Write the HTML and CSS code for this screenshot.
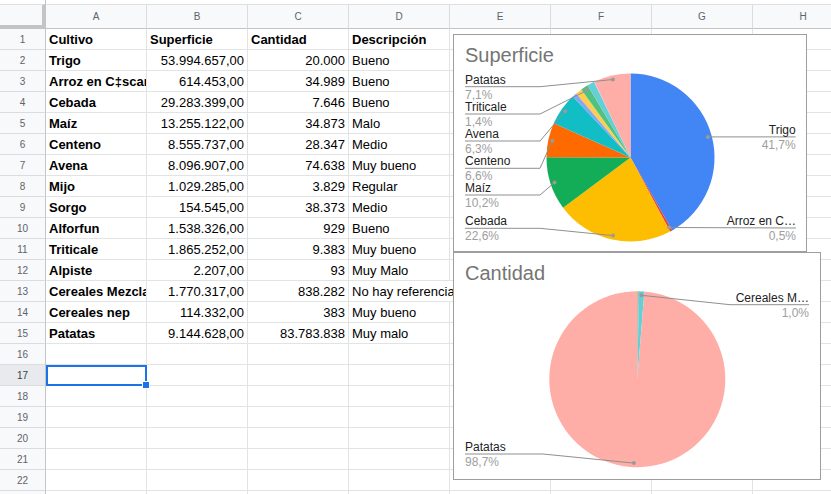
FILE: index.html
```html
<!DOCTYPE html>
<html lang="es">
<head>
<meta charset="utf-8">
<title>Cultivos</title>
<link rel="stylesheet" href="styles.css">
</head>
<body>
<div class="sheet">
  <div class="topbar"><div class="topbar-corner"></div></div>
  <div class="grid">
    <div class="corner"></div>
    <div class="ch">A</div><div class="ch">B</div><div class="ch">C</div><div class="ch">D</div>
    <div class="ch">E</div><div class="ch">F</div><div class="ch">G</div><div class="ch">H</div>

    <div class="rh">1</div><div class="c b">Cultivo</div><div class="c b">Superficie</div><div class="c b">Cantidad</div><div class="c b">Descripción</div><div class="c"></div><div class="c"></div><div class="c"></div><div class="c"></div>
    <div class="rh">2</div><div class="c b">Trigo</div><div class="c n">53.994.657,00</div><div class="c n">20.000</div><div class="c">Bueno</div><div class="c"></div><div class="c"></div><div class="c"></div><div class="c"></div>
    <div class="rh">3</div><div class="c b">Arroz en C‡scara</div><div class="c n">614.453,00</div><div class="c n">34.989</div><div class="c">Bueno</div><div class="c"></div><div class="c"></div><div class="c"></div><div class="c"></div>
    <div class="rh">4</div><div class="c b">Cebada</div><div class="c n">29.283.399,00</div><div class="c n">7.646</div><div class="c">Bueno</div><div class="c"></div><div class="c"></div><div class="c"></div><div class="c"></div>
    <div class="rh">5</div><div class="c b">Maíz</div><div class="c n">13.255.122,00</div><div class="c n">34.873</div><div class="c">Malo</div><div class="c"></div><div class="c"></div><div class="c"></div><div class="c"></div>
    <div class="rh">6</div><div class="c b">Centeno</div><div class="c n">8.555.737,00</div><div class="c n">28.347</div><div class="c">Medio</div><div class="c"></div><div class="c"></div><div class="c"></div><div class="c"></div>
    <div class="rh">7</div><div class="c b">Avena</div><div class="c n">8.096.907,00</div><div class="c n">74.638</div><div class="c">Muy bueno</div><div class="c"></div><div class="c"></div><div class="c"></div><div class="c"></div>
    <div class="rh">8</div><div class="c b">Mijo</div><div class="c n">1.029.285,00</div><div class="c n">3.829</div><div class="c">Regular</div><div class="c"></div><div class="c"></div><div class="c"></div><div class="c"></div>
    <div class="rh">9</div><div class="c b">Sorgo</div><div class="c n">154.545,00</div><div class="c n">38.373</div><div class="c">Medio</div><div class="c"></div><div class="c"></div><div class="c"></div><div class="c"></div>
    <div class="rh">10</div><div class="c b">Alforfun</div><div class="c n">1.538.326,00</div><div class="c n">929</div><div class="c">Bueno</div><div class="c"></div><div class="c"></div><div class="c"></div><div class="c"></div>
    <div class="rh">11</div><div class="c b">Triticale</div><div class="c n">1.865.252,00</div><div class="c n">9.383</div><div class="c">Muy bueno</div><div class="c"></div><div class="c"></div><div class="c"></div><div class="c"></div>
    <div class="rh">12</div><div class="c b">Alpiste</div><div class="c n">2.207,00</div><div class="c n">93</div><div class="c">Muy Malo</div><div class="c"></div><div class="c"></div><div class="c"></div><div class="c"></div>
    <div class="rh">13</div><div class="c b">Cereales Mezcla</div><div class="c n">1.770.317,00</div><div class="c n">838.282</div><div class="c ov">No hay referencia</div><div class="c"></div><div class="c"></div><div class="c"></div><div class="c"></div>
    <div class="rh">14</div><div class="c b">Cereales nep</div><div class="c n">114.332,00</div><div class="c n">383</div><div class="c">Muy bueno</div><div class="c"></div><div class="c"></div><div class="c"></div><div class="c"></div>
    <div class="rh">15</div><div class="c b">Patatas</div><div class="c n">9.144.628,00</div><div class="c n">83.783.838</div><div class="c">Muy malo</div><div class="c"></div><div class="c"></div><div class="c"></div><div class="c"></div>
    <div class="rh">16</div><div class="c"></div><div class="c"></div><div class="c"></div><div class="c"></div><div class="c"></div><div class="c"></div><div class="c"></div><div class="c"></div>
    <div class="rh cur">17</div><div class="c sel"></div><div class="c"></div><div class="c"></div><div class="c"></div><div class="c"></div><div class="c"></div><div class="c"></div><div class="c"></div>
    <div class="rh">18</div><div class="c"></div><div class="c"></div><div class="c"></div><div class="c"></div><div class="c"></div><div class="c"></div><div class="c"></div><div class="c"></div>
    <div class="rh">19</div><div class="c"></div><div class="c"></div><div class="c"></div><div class="c"></div><div class="c"></div><div class="c"></div><div class="c"></div><div class="c"></div>
    <div class="rh">20</div><div class="c"></div><div class="c"></div><div class="c"></div><div class="c"></div><div class="c"></div><div class="c"></div><div class="c"></div><div class="c"></div>
    <div class="rh">21</div><div class="c"></div><div class="c"></div><div class="c"></div><div class="c"></div><div class="c"></div><div class="c"></div><div class="c"></div><div class="c"></div>
    <div class="rh">22</div><div class="c"></div><div class="c"></div><div class="c"></div><div class="c"></div><div class="c"></div><div class="c"></div><div class="c"></div><div class="c"></div>
    <div class="rh">23</div><div class="c"></div><div class="c"></div><div class="c"></div><div class="c"></div><div class="c"></div><div class="c"></div><div class="c"></div><div class="c"></div>
  </div>

  <div class="chart chart-sup">
    <div class="chart-title">Superficie</div>
    <svg class="pie" width="352" height="216" viewBox="0 0 352 216">
      <g transform="translate(176.5 122.5)">
        <path fill="#4285f4" d="M0 0L0 -84A84 84 0 0 1 41.75 72.90Z"/>
        <path fill="#ea4335" d="M0 0L41.75 72.90A84 84 0 0 1 39.56 74.10Z"/>
        <path fill="#fdbd00" d="M0 0L39.56 74.10A84 84 0 0 1 -67.40 50.13Z"/>
        <path fill="#14ad57" d="M0 0L-67.40 50.13A84 84 0 0 1 -84.0 -0.34Z"/>
        <path fill="#ff6a00" d="M0 0L-84.0 -0.34A84 84 0 0 1 -76.72 -34.20Z"/>
        <path fill="#12bec6" d="M0 0L-76.72 -34.20A84 84 0 0 1 -57.77 -60.98Z"/>
        <path fill="#7baaf7" d="M0 0L-57.77 -60.98A84 84 0 0 1 -54.65 -63.80Z"/>
        <path fill="#f07b72" d="M0 0L-54.65 -63.80A84 84 0 0 1 -54.16 -64.20Z"/>
        <path fill="#fcd04f" d="M0 0L-54.16 -64.20A84 84 0 0 1 -49.22 -68.07Z"/>
        <path fill="#4fc281" d="M0 0L-49.22 -68.07A84 84 0 0 1 -42.87 -72.24Z"/>
        <path fill="#ff994d" d="M0 0L-42.87 -72.24A84 84 0 0 1 -42.86 -72.24Z"/>
        <path fill="#62d0d6" d="M0 0L-42.86 -72.24A84 84 0 0 1 -36.51 -75.66Z"/>
        <path fill="#b3cefb" d="M0 0L-36.51 -75.66A84 84 0 0 1 -36.09 -75.86Z"/>
        <path fill="#ffada7" d="M0 0L-36.09 -75.86A84 84 0 0 1 0 -84Z"/>
      </g>
      <g class="lead">
        <polyline points="11,51.7 86,51.7 158.9,44.5"/>
        <polyline points="11,79 86,79 132.6,55.6"/>
        <polyline points="11,106 86,106 111.2,76.3"/>
        <polyline points="11,133.3 86,133.3 98.3,105.7"/>
        <polyline points="11,160 86,160 100.5,147.5"/>
        <polyline points="11,193.3 86,193.3 159,200.6"/>
        <polyline points="341.7,101.9 253.8,101.9"/>
        <polyline points="342,193 215.2,192.5"/>
      </g>
      <g class="dot">
        <circle cx="158.9" cy="44.5" r="2"/>
        <circle cx="132.6" cy="55.6" r="2"/>
        <circle cx="111.2" cy="76.3" r="2"/>
        <circle cx="98.3" cy="105.7" r="2"/>
        <circle cx="100.5" cy="147.5" r="2"/>
        <circle cx="159" cy="200.6" r="2"/>
        <circle cx="253.8" cy="101.9" r="2"/>
        <circle cx="215.2" cy="192.5" r="2"/>
      </g>
      <g class="lbl">
        <text x="11" y="48.7">Patatas</text><text class="pct" x="11" y="63.7">7,1%</text>
        <text x="11" y="76">Triticale</text><text class="pct" x="11" y="91">1,4%</text>
        <text x="11" y="103">Avena</text><text class="pct" x="11" y="118">6,3%</text>
        <text x="11" y="130.3">Centeno</text><text class="pct" x="11" y="145.3">6,6%</text>
        <text x="11" y="157">Maíz</text><text class="pct" x="11" y="172">10,2%</text>
        <text x="11" y="190.3">Cebada</text><text class="pct" x="11" y="205.3">22,6%</text>
        <text class="end" x="341.7" y="98.7">Trigo</text><text class="pct end" x="341.7" y="113.7">41,7%</text>
        <text class="end" x="342" y="190">Arroz en C…</text><text class="pct end" x="342" y="205">0,5%</text>
      </g>
    </svg>
  </div>

  <div class="chart chart-cant">
    <div class="chart-title">Cantidad</div>
    <svg class="pie" width="366" height="226" viewBox="0 0 366 226">
      <g transform="translate(183.3 126.2)">
        <path fill="#4285f4" d="M0 0L0 -88A88 88 0 0 1 0.13 -88Z"/>
        <path fill="#ea4335" d="M0 0L0.13 -88A88 88 0 0 1 0.358 -88Z"/>
        <path fill="#fdbd00" d="M0 0L0.358 -88A88 88 0 0 1 0.409 -88Z"/>
        <path fill="#14ad57" d="M0 0L0.409 -88A88 88 0 0 1 0.636 -88Z"/>
        <path fill="#ff6a00" d="M0 0L0.636 -88A88 88 0 0 1 0.82 -88Z"/>
        <path fill="#12bec6" d="M0 0L0.82 -88A88 88 0 0 1 1.305 -87.99Z"/>
        <path fill="#7baaf7" d="M0 0L1.305 -87.99A88 88 0 0 1 1.332 -87.99Z"/>
        <path fill="#f07b72" d="M0 0L1.332 -87.99A88 88 0 0 1 1.58 -87.99Z"/>
        <path fill="#fcd04f" d="M0 0L1.58 -87.99A88 88 0 0 1 1.587 -87.99Z"/>
        <path fill="#4fc281" d="M0 0L1.587 -87.99A88 88 0 0 1 1.648 -87.985Z"/>
        <path fill="#62d0d6" d="M0 0L1.648 -87.985A88 88 0 0 1 7.102 -87.713Z"/>
        <path fill="#b3cefb" d="M0 0L7.102 -87.713A88 88 0 0 1 7.105 -87.712Z"/>
        <path fill="#ffada7" d="M0 0L7.105 -87.712A88 88 0 1 1 0 -88Z"/>
      </g>
      <g class="lead">
        <polyline points="355,51.7 276,51.7 187.5,42.3"/>
        <polyline points="11,201 89,201 179.9,210.1"/>
      </g>
      <g class="dot">
        <circle cx="187.5" cy="42.3" r="2"/>
        <circle cx="179.9" cy="210.1" r="2"/>
      </g>
      <g class="lbl">
        <text class="end" x="355" y="48.7">Cereales M…</text><text class="pct end" x="355" y="63.7">1,0%</text>
        <text x="11" y="198">Patatas</text><text class="pct" x="11" y="213">98,7%</text>
      </g>
    </svg>
  </div>
</div>
</body>
</html>
```

FILE: styles.css
```css
* { box-sizing: border-box; }

body {
  margin: 0;
  background: #fff;
  font-family: "Liberation Sans", Arial, sans-serif;
}

.sheet {
  position: relative;
  width: 831px;
  height: 494px;
  overflow: hidden;
}

.topbar {
  height: 4px;
  display: flex;
}

.topbar-corner {
  width: 46px;
  height: 4px;
  border-right: 1px solid #c4c4c4;
}

.grid {
  display: grid;
  grid-template-columns: 46px repeat(8, 101px);
  grid-template-rows: 25px repeat(23, 21px);
  width: 854px;
}

.corner {
  background: #f8f9fa;
  border-top: 1px solid #e0e0e0;
  border-right: 4px solid #c4c4c4;
  border-bottom: 4px solid #c4c4c4;
}

.ch {
  background: #f8f9fa;
  border-top: 1px solid #e0e0e0;
  border-right: 1px solid #dadce0;
  border-bottom: 1px solid #c4c4c4;
  display: flex;
  align-items: center;
  justify-content: center;
  font-size: 10px;
  color: #5f6368;
}

.rh {
  background: #f8f9fa;
  border-right: 1px solid #c4c4c4;
  border-bottom: 1px solid #dadce0;
  display: flex;
  align-items: center;
  justify-content: center;
  font-size: 10px;
  color: #5f6368;
}

.rh.cur {
  background: #e8eaed;
  color: #3c4043;
}

.c {
  position: relative;
  border-right: 1px solid #e2e3e3;
  border-bottom: 1px solid #e2e3e3;
  padding: 2px 3px 0;
  font-size: 13px;
  line-height: 17px;
  color: #000;
  white-space: nowrap;
  overflow: hidden;
}

.b { font-weight: bold; }
.n { text-align: right; }

.ov {
  overflow: visible;
  z-index: 1;
  border-right-color: transparent;
}

.sel { overflow: visible; z-index: 2; }

.sel::before {
  content: "";
  position: absolute;
  left: 0;
  top: 0;
  right: -1px;
  bottom: -1px;
  border: 2px solid #1a73e8;
}

.sel::after {
  content: "";
  position: absolute;
  left: 97px;
  top: 17px;
  width: 6px;
  height: 6px;
  background: #1a73e8;
  box-shadow: 0 0 0 1px #fff;
}

.chart {
  position: absolute;
  background: #fff;
  border: 1px solid #9e9e9e;
  z-index: 5;
}

.chart-sup {
  left: 453px;
  top: 34px;
  width: 354px;
  height: 218px;
}

.chart-cant {
  left: 453px;
  top: 252px;
  width: 368px;
  height: 228px;
  z-index: 6;
}

.chart-title {
  position: relative;
  z-index: 1;
  padding: 8px 11px;
  font-size: 20px;
  line-height: 24px;
  color: #757575;
}

.pie {
  position: absolute;
  left: 0;
  top: 0;
}

.lead polyline {
  fill: none;
  stroke: #8f8f8f;
  stroke-width: 1;
}

.dot circle { fill: #9a9a9a; }

.lbl text {
  font-family: "Liberation Sans", Arial, sans-serif;
  font-size: 12px;
  fill: #222;
}

.lbl text.pct { fill: #9e9e9e; }
.lbl text.end { text-anchor: end; }
```
